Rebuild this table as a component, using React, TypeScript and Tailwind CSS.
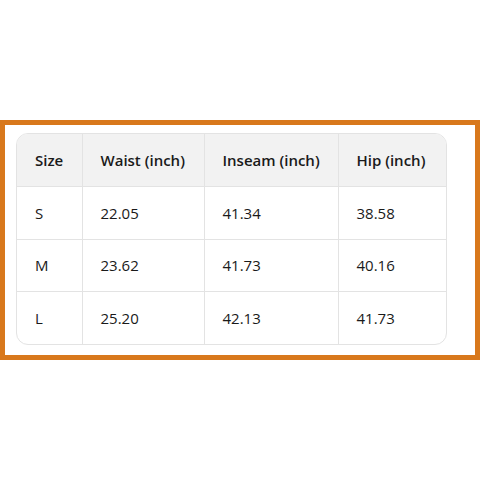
const rows = [
  { size: "S", waist: "22.05", inseam: "41.34", hip: "38.58" },
  { size: "M", waist: "23.62", inseam: "41.73", hip: "40.16" },
  { size: "L", waist: "25.20", inseam: "42.13", hip: "41.73" },
];

export default function App() {
  return (
    <div className="h-[480px] w-[480px] bg-white pt-[120px] font-['Open_Sans',sans-serif]">
      <div className="h-[240px] w-[480px] border-[5px] border-[#d8781c] pl-[11px] pt-[8px]">
        <div className="w-[431px] overflow-hidden rounded-xl border border-[#e3e3e3]">
          <table className="w-full table-fixed border-collapse text-[15px] text-[#1a1a1a]">
            <colgroup>
              <col className="w-[65px]" />
              <col className="w-[122px]" />
              <col className="w-[134px]" />
              <col />
            </colgroup>
            <thead>
              <tr className="h-[52.5px] bg-[#f2f2f2]">
                <th className="pl-[18px] text-left font-semibold">Size</th>
                <th className="border-l border-[#e3e3e3] pl-[18px] text-left font-semibold">Waist (inch)</th>
                <th className="border-l border-[#e3e3e3] pl-[18px] text-left font-semibold">Inseam (inch)</th>
                <th className="border-l border-[#e3e3e3] pl-[18px] text-left font-semibold">Hip (inch)</th>
              </tr>
            </thead>
            <tbody>
              {rows.map((r) => (
                <tr key={r.size} className="h-[52.5px] border-t border-[#e3e3e3]">
                  <td className="pl-[18px]">{r.size}</td>
                  <td className="border-l border-[#e3e3e3] pl-[18px]">{r.waist}</td>
                  <td className="border-l border-[#e3e3e3] pl-[18px]">{r.inseam}</td>
                  <td className="border-l border-[#e3e3e3] pl-[18px]">{r.hip}</td>
                </tr>
              ))}
            </tbody>
          </table>
        </div>
      </div>
    </div>
  );
}
